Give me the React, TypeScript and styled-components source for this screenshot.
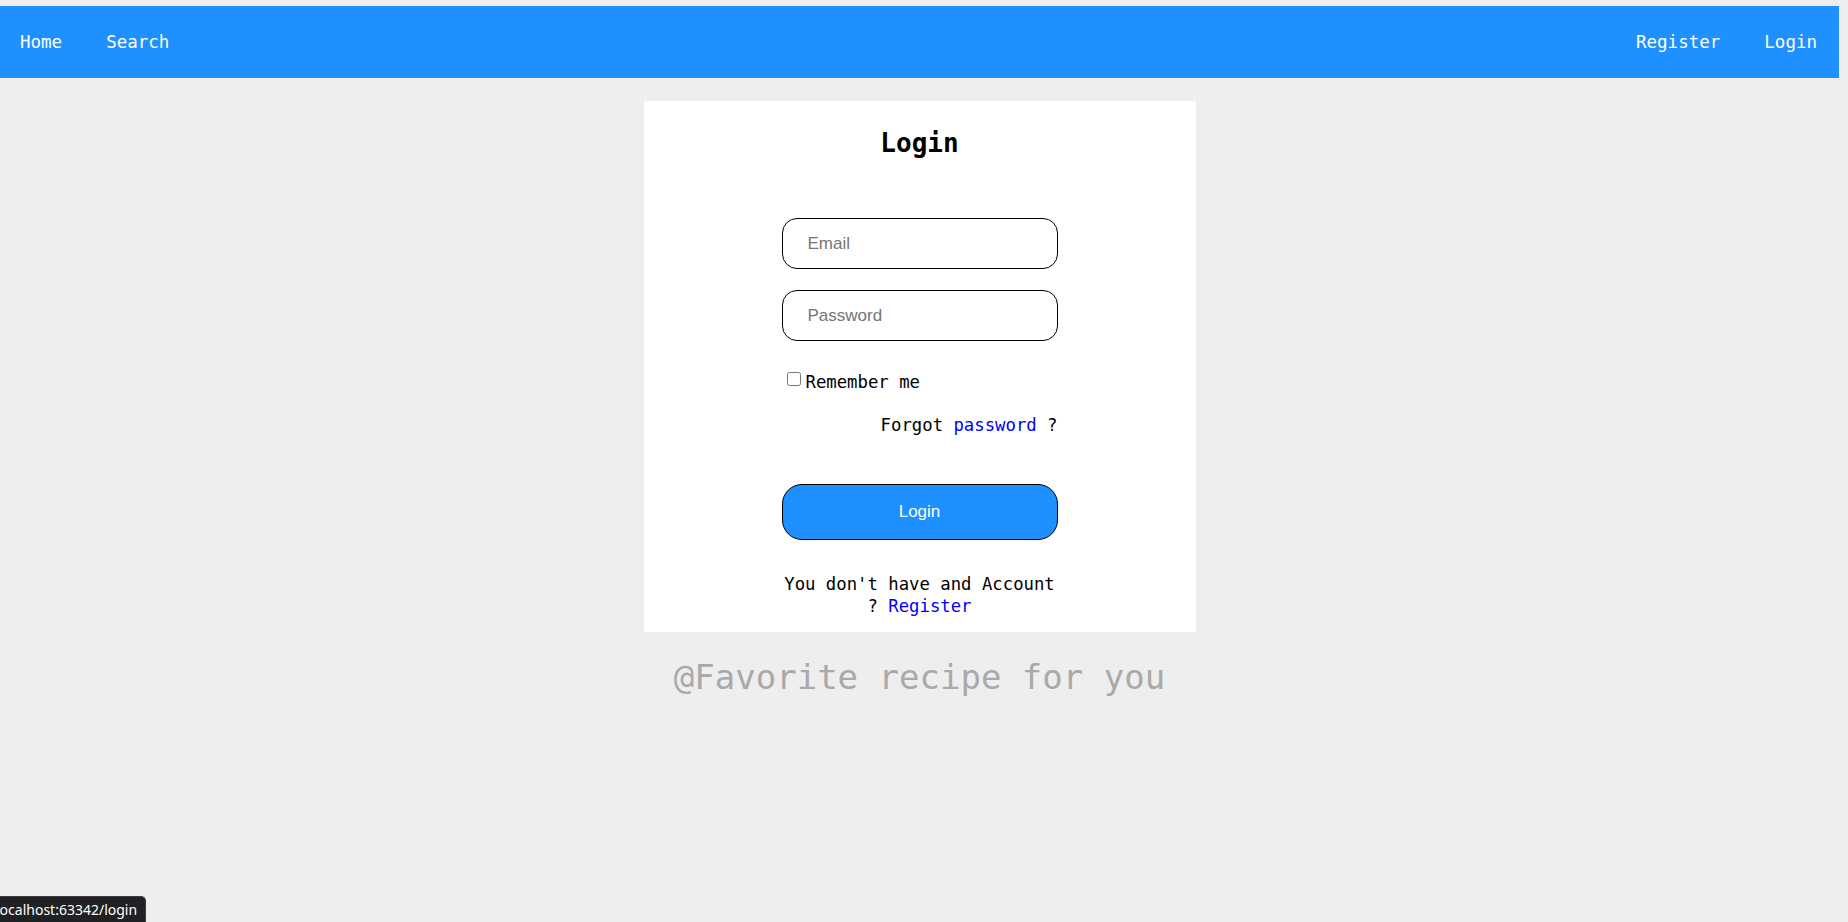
import React from "react";
import styled, { createGlobalStyle } from "styled-components";

const GlobalStyle = createGlobalStyle`
  html, body {
    margin: 0;
    padding: 0;
    background: #eeeeee;
    font-family: "DejaVu Sans Mono", "Liberation Mono", monospace;
  }
`;

const Page = styled.div`
  width: 1839px;
  padding-top: 6px;
`;

const NavBar = styled.nav`
  height: 72px;
  background: #1e90ff;
  display: flex;
  align-items: center;
  justify-content: space-between;
  padding: 0 22px 0 20px;
  box-sizing: border-box;
`;

const NavGroup = styled.div`
  display: flex;
  gap: 44px;
`;

const NavLink = styled.a`
  color: #ffffff;
  text-decoration: none;
  font-size: 17.5px;
  line-height: 20px;
`;

const Main = styled.main`
  display: flex;
  flex-direction: column;
  align-items: center;
  padding-top: 23px;
`;

const Card = styled.section`
  width: 552px;
  background: #ffffff;
  padding: 27px 0 14.5px;
  box-sizing: border-box;
  display: flex;
  flex-direction: column;
  align-items: center;
`;

const Title = styled.h2`
  margin: 0;
  font-size: 26px;
  font-weight: bold;
  line-height: 30px;
  color: #000;
`;

const Form = styled.form`
  width: 276px;
  margin-top: 60px;
  display: flex;
  flex-direction: column;
  font-size: 17.3px;
  color: #000;
`;

const Field = styled.input<{ $top?: number }>`
  height: 51px;
  box-sizing: border-box;
  margin: ${(p) => p.$top ?? 0}px 0 0;
  border: 1px solid #000;
  border-radius: 15px;
  padding: 0 25px;
  font-family: "Liberation Sans", Arial, sans-serif;
  font-size: 17px;
  outline: none;
  background: #fff;
  &::placeholder {
    color: #757575;
  }
`;

const RememberRow = styled.label`
  margin-top: 31px;
  display: flex;
  align-items: flex-start;
  line-height: 20px;
`;

const Check = styled.input`
  width: 14px;
  height: 14px;
  margin: 0 5px;
`;

const ForgotRow = styled.div`
  margin-top: 23px;
  text-align: right;
  line-height: 20px;
`;

const BlueLink = styled.a`
  color: #0000ff;
  text-decoration: none;
`;

const SubmitButton = styled.button`
  margin-top: 49px;
  height: 56px;
  box-sizing: border-box;
  border: 1px solid #000;
  border-radius: 20px;
  background: #1e90ff;
  color: #ffffff;
  font-family: "Liberation Sans", Arial, sans-serif;
  font-size: 17px;
`;

const FooterText = styled.p`
  margin: 34px 0 0;
  text-align: center;
  line-height: 21.6px;
`;

const Tagline = styled.div`
  margin-top: 25px;
  font-size: 34px;
  color: #a9a9a9;
`;

const StatusBubble = styled.div`
  position: fixed;
  left: 0;
  bottom: 0;
  height: 26px;
  background: #202124;
  border-top-right-radius: 5px;
  border-top: 1px solid #3c3c3c;
  border-right: 1px solid #3c3c3c;
  box-sizing: border-box;
  overflow: hidden;
  display: flex;
  align-items: center;
  padding-right: 8px;
  font-family: "Noto Sans", "Open Sans", sans-serif;
  font-size: 14px;
  color: #ffffff;
`;

const StatusText = styled.span`
  margin-left: -4px;
  white-space: nowrap;
`;

export default function App() {
  return (
    <>
      <GlobalStyle />
      <Page>
        <NavBar>
          <NavGroup>
            <NavLink href="#">Home</NavLink>
            <NavLink href="#">Search</NavLink>
          </NavGroup>
          <NavGroup>
            <NavLink href="#">Register</NavLink>
            <NavLink href="#">Login</NavLink>
          </NavGroup>
        </NavBar>
        <Main>
          <Card>
            <Title>Login</Title>
            <Form onSubmit={(e) => e.preventDefault()}>
              <Field type="email" placeholder="Email" />
              <Field type="password" placeholder="Password" $top={21} />
              <RememberRow>
                <Check type="checkbox" />
                Remember me
              </RememberRow>
              <ForgotRow>
                Forgot <BlueLink href="#">password</BlueLink> ?
              </ForgotRow>
              <SubmitButton type="submit">Login</SubmitButton>
              <FooterText>
                You don't have and Account ? <BlueLink href="#">Register</BlueLink>
              </FooterText>
            </Form>
          </Card>
          <Tagline>@Favorite recipe for you</Tagline>
        </Main>
      </Page>
      <StatusBubble>
        <StatusText>localhost:63342/login</StatusText>
      </StatusBubble>
    </>
  );
}
